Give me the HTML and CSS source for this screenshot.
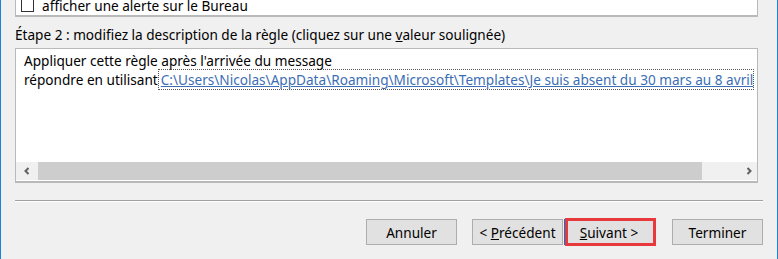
FILE: index.html
```html
<!DOCTYPE html>
<html>
<head>
    <meta charset="UTF-8">
    <title>Gestionnaire des règles</title>
    <link rel="stylesheet" href="styles.css">
</head>
<body>
    <div class="window">
        <div class="list list-top">
            <label class="check"><span class="check-box"></span>afficher une alerte sur le Bureau</label>
        </div>

        <div class="step">Étape 2 : modifiez la description de la règle (cliquez sur une <u>v</u>aleur soulignée)</div>

        <div class="list desc">
            <div class="desc-text">
                <div class="desc-line">Appliquer cette règle après l'arrivée du message</div>
                <div class="desc-line">répondre en utilisant<a class="rule-link" href="#">C:\Users\Nicolas\AppData\Roaming\Microsoft\Templates\Je suis absent du 30 mars au 8 avril</a></div>
            </div>
            <div class="hscroll">
                <span class="sb-btn">
                    <svg width="8" height="8" viewBox="0 0 8 8"><path d="M5.5 1 L2.5 4 L5.5 7" fill="none" stroke="#606060" stroke-width="2"/></svg>
                </span>
                <span class="sb-thumb"></span>
                <span class="sb-track"></span>
                <span class="sb-btn">
                    <svg width="8" height="8" viewBox="0 0 8 8"><path d="M2.5 1 L5.5 4 L2.5 7" fill="none" stroke="#606060" stroke-width="2"/></svg>
                </span>
            </div>
        </div>

        <div class="sep"></div>

        <div class="buttons">
            <button class="btn">Annuler</button>
            <button class="btn btn-prev">&lt; <u>P</u>récédent</button>
            <button class="btn btn-next"><u>S</u>uivant &gt;</button>
            <button class="btn btn-finish">Terminer</button>
        </div>
    </div>
</body>
</html>
```

FILE: styles.css
```css
html, body {
    margin: 0;
    height: 100%;
}
body {
    font-family: 'Noto Sans', 'Liberation Sans', sans-serif;
    font-size: 13.6px;
    color: #000;
    background-color: #f0f0f0;
    overflow: hidden;
}
.window {
    height: 259px;
    box-sizing: border-box;
    border-left: 1px solid #1883d7;
    border-right: 1px solid #1883d7;
    padding: 0 14px 0 14px;
}
.list {
    background-color: #fff;
    border: 1px solid #b9b9b9;
    margin-right: 5px;
}
.list-top {
    height: 17px;
    box-sizing: border-box;
    border-top: none;
    border-bottom-width: 2px;
    overflow: hidden;
}
.check {
    display: flex;
    height: 16px;
    line-height: 16px;
    margin-top: -2px;
    white-space: nowrap;
}
.check-box {
    flex: none;
    width: 11px;
    height: 11px;
    border: 1px solid #333;
    background: #fff;
    margin: 1px 8px 0 5px;
}
.step {
    line-height: 16px;
    height: 16px;
    margin-top: 10px;
    white-space: nowrap;
}
.step u {
    text-decoration-thickness: 1px;
}
.desc {
    margin-top: 5px;
    height: 135px;
    box-sizing: border-box;
    display: flex;
    flex-direction: column;
    border-bottom-width: 2px;
}
.desc-text {
    flex: 1;
    padding: 2px 0 0 8px;
    overflow: hidden;
    white-space: nowrap;
}
.desc-line {
    line-height: 19px;
    height: 19px;
}
.rule-link {
    color: #3c6eb4;
    text-decoration: underline;
    outline: 1px dotted #555;
    outline-offset: 0;
    padding: 0 0 0 2px;
    margin-left: 1px;
}
.hscroll {
    display: flex;
    height: 18px;
    margin-bottom: 1px;
    background-color: #f0f0f0;
}
.sb-btn {
    width: 22px;
    display: flex;
    align-items: center;
    justify-content: center;
}
.sb-btn:last-child {
    width: 17px;
}
.sb-thumb {
    width: 664px;
    background-color: #cdcdcd;
}
.sb-track {
    flex: 1;
}
.sep {
    height: 1px;
    background-color: #a0a0a0;
    border-bottom: 1px solid #fff;
    margin-top: 17px;
}
.buttons {
    display: flex;
    justify-content: flex-end;
    margin-top: 17px;
}
.btn {
    font-family: inherit;
    font-size: 13.6px;
    width: 91px;
    height: 26px;
    padding: 0;
    background-color: #e1e1e1;
    border: 1px solid #adadad;
    color: #000;
    margin-left: 15px;
}
.btn-next {
    margin-left: 1px;
    width: 90px;
    border-color: #0078d7;
    position: relative;
}
.btn-next::after {
    content: '';
    position: absolute;
    left: 0;
    right: -3px;
    top: -2px;
    bottom: -2px;
    border: 3px solid #e8393d;
}
.btn-finish {
    margin-left: 18px;
}
```
